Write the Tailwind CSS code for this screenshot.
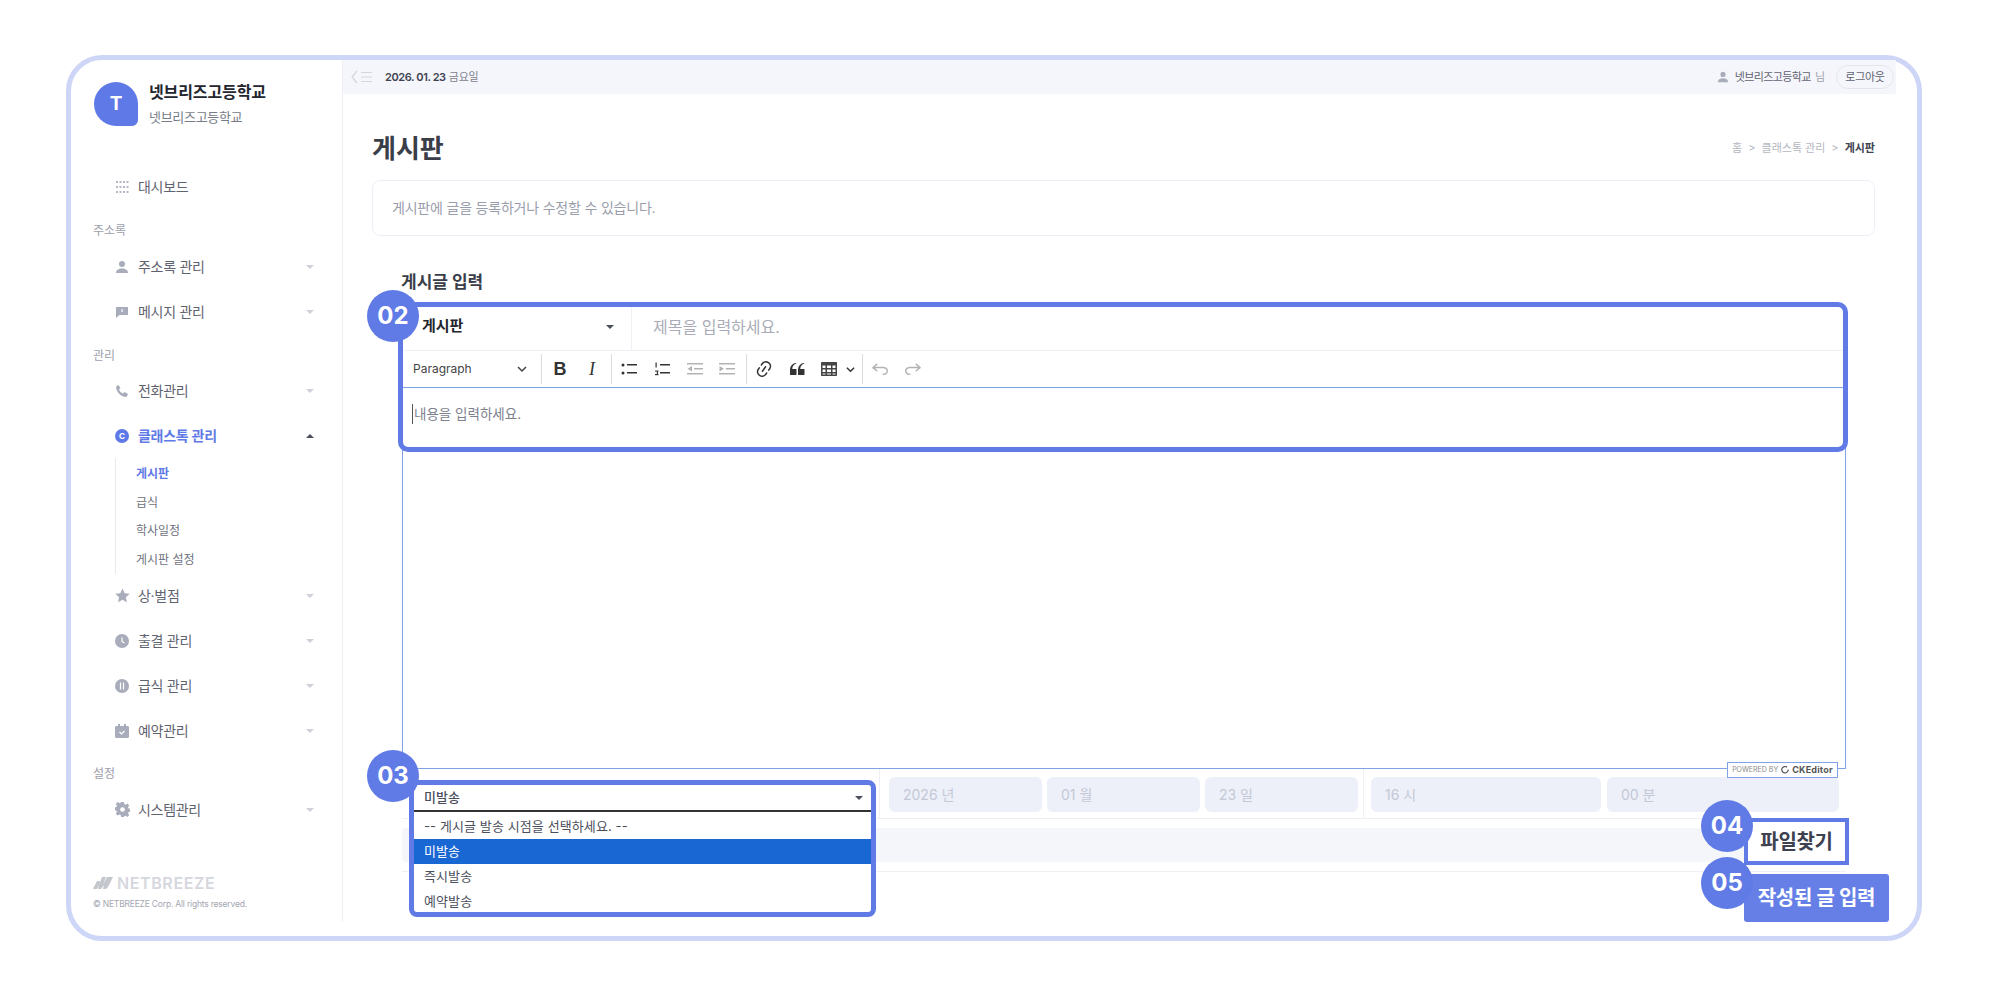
<!DOCTYPE html>
<html lang="ko">
  <head>
    <meta charset="UTF-8" />
    <meta name="viewport" content="width=device-width, initial-scale=1.0" />
    <title>게시판</title>
    <script src="https://cdn.jsdelivr.net/npm/@tailwindcss/browser@4"></script>
  </head>
  <body class="relative h-screen overflow-hidden bg-white font-['Inter','Noto_Sans_CJK_KR',sans-serif] text-[#3d4150]">
    <!-- device frame -->
    <div class="ml-[66px] mt-[55px] flex h-[886px] w-[1856px] rounded-[36px] border-[5px] border-[#cdd6f6] pb-[14px] pr-[21px]">
      <!-- sidebar -->
      <aside class="flex w-[272px] shrink-0 flex-col border-r border-[#eef0f5] pl-[22px]">
        <div class="flex items-center gap-[11px] pl-px pt-[22px]">
          <div class="flex h-[44px] w-[44px] items-center justify-center rounded-[22px] rounded-br-[6px] bg-[#5f7ae6] text-[19px] font-bold text-white">T</div>
          <div>
            <div class="text-[16px] font-bold leading-[20px] tracking-[-0.1px] text-[#23262f]">넷브리즈고등학교</div>
            <div class="mt-[6px] text-[13px] leading-[18px] tracking-[-0.3px] text-[#777b88]">넷브리즈고등학교</div>
          </div>
        </div>

        <nav class="mt-[38px] pr-[28px] text-[14px] text-[#5f6370]">
          <a class="flex h-[45px] items-center pl-[22px]">
            <svg class="mr-[9px] h-[14px] w-[14px]" viewBox="0 0 14 14" fill="#b5b8c4"><rect x="1" y="1" width="2" height="2"/><rect x="4.500" y="1" width="2" height="2"/><rect x="8" y="1" width="2" height="2"/><rect x="11.500" y="1" width="2" height="2"/><rect x="1" y="6" width="2" height="2"/><rect x="4.500" y="6" width="2" height="2"/><rect x="8" y="6" width="2" height="2"/><rect x="11.500" y="6" width="2" height="2"/><rect x="1" y="11" width="2" height="2"/><rect x="4.500" y="11" width="2" height="2"/><rect x="8" y="11" width="2" height="2"/><rect x="11.500" y="11" width="2" height="2"/></svg>
            <span class="tracking-[-0.3px]">대시보드</span>
          </a>

          <div class="flex h-[35px] items-center pt-[9px] text-[12px] text-[#9da0ac]">주소록</div>
          <a class="flex h-[45px] items-center pl-[22px]">
            <svg class="mr-[9px] h-[14px] w-[14px]" viewBox="0 0 14 14" fill="#a9adbb"><circle cx="7" cy="4" r="3"/><path d="M1 13c0-3 2.500-4.500 6-4.500s6 1.500 6 4.500z"/></svg>
            <span class="flex-1 tracking-[-0.3px]">주소록 관리</span>
            <span class="h-0 w-0 border-x-[4px] border-t-[4px] border-x-transparent border-t-[#cfd1d9]"></span>
          </a>
          <a class="flex h-[45px] items-center pl-[22px]">
            <svg class="mr-[9px] h-[14px] w-[14px]" viewBox="0 0 14 14" fill="#a9adbb"><path d="M1 2h12v8H4.500L1 13z"/><rect x="6.500" y="4" width="1.200" height="3" fill="#fff"/></svg>
            <span class="flex-1 tracking-[-0.3px]">메시지 관리</span>
            <span class="h-0 w-0 border-x-[4px] border-t-[4px] border-x-transparent border-t-[#cfd1d9]"></span>
          </a>

          <div class="flex h-[34px] items-center pt-[9px] text-[12px] text-[#9da0ac]">관리</div>
          <a class="flex h-[45px] items-center pl-[22px]">
            <svg class="mr-[9px] h-[14px] w-[14px]" viewBox="0 0 14 14" fill="#a9adbb"><path d="M1 2.500 3.500 1l2 3-1.500 1.500c.8 2 2 3.200 4 4L9.500 8l3.500 2-1.500 3C6 13 1 8 1 2.500z"/></svg>
            <span class="flex-1 tracking-[-0.3px]">전화관리</span>
            <span class="h-0 w-0 border-x-[4px] border-t-[4px] border-x-transparent border-t-[#cfd1d9]"></span>
          </a>
          <a class="flex h-[45px] items-center pl-[22px] font-semibold text-[#5f7ae6]">
            <span class="mr-[9px] flex h-[14px] w-[14px] items-center justify-center rounded-full bg-[#5f7ae6] text-[8px] font-bold text-white">C</span>
            <span class="flex-1 tracking-[-0.3px]">클래스톡 관리</span>
            <span class="h-0 w-0 border-x-[4px] border-b-[4px] border-x-transparent border-b-[#4b4f5c]"></span>
          </a>
          <div class="ml-[22px] border-l border-[#e8eaf0] pl-[20px] pt-[2px] text-[12px] text-[#6e7280]">
            <div class="flex h-[28.5px] items-center font-semibold text-[#5f7ae6]">게시판</div>
            <div class="flex h-[28.5px] items-center">급식</div>
            <div class="flex h-[28.5px] items-center">학사일정</div>
            <div class="-mb-px flex h-[28.5px] items-center">게시판 설정</div>
          </div>
          <a class="flex h-[45px] items-center pl-[22px]">
            <svg class="mr-[8px] h-[15px] w-[15px]" viewBox="0 0 14 14" fill="#a9adbb"><path d="m7 .5 2 4.300 4.700.6-3.500 3.200.9 4.700L7 11l-4.100 2.300.9-4.700L.3 5.400 5 4.800z"/></svg>
            <span class="flex-1 tracking-[-0.3px]">상·벌점</span>
            <span class="h-0 w-0 border-x-[4px] border-t-[4px] border-x-transparent border-t-[#cfd1d9]"></span>
          </a>
          <a class="flex h-[45px] items-center pl-[22px]">
            <svg class="mr-[9px] h-[14px] w-[14px]" viewBox="0 0 14 14"><circle cx="7" cy="7" r="7" fill="#a9adbb"/><path d="M7 3.500V7.500l2.500 1.500" fill="none" stroke="#fff" stroke-width="1.200"/></svg>
            <span class="flex-1 tracking-[-0.3px]">출결 관리</span>
            <span class="h-0 w-0 border-x-[4px] border-t-[4px] border-x-transparent border-t-[#cfd1d9]"></span>
          </a>
          <a class="flex h-[45px] items-center pl-[22px]">
            <svg class="mr-[9px] h-[14px] w-[14px]" viewBox="0 0 14 14"><circle cx="7" cy="7" r="7" fill="#a9adbb"/><path d="M5.500 3.500v7M8.500 3.500v7" fill="none" stroke="#fff" stroke-width="1.200"/></svg>
            <span class="flex-1 tracking-[-0.3px]">급식 관리</span>
            <span class="h-0 w-0 border-x-[4px] border-t-[4px] border-x-transparent border-t-[#cfd1d9]"></span>
          </a>
          <a class="flex h-[45px] items-center pl-[22px]">
            <svg class="mr-[9px] h-[14px] w-[14px]" viewBox="0 0 14 14"><path d="M3 0h2v2h4V0h2v2h1.500c.8 0 1.500.7 1.500 1.500V12.500c0 .8-.7 1.500-1.500 1.500h-11C.7 14 0 13.300 0 12.500V3.500C0 2.700.7 2 1.500 2H3z" fill="#a9adbb"/><path d="m4.500 8 2 2 3-3" fill="none" stroke="#fff" stroke-width="1.200"/></svg>
            <span class="flex-1 tracking-[-0.3px]">예약관리</span>
            <span class="h-0 w-0 border-x-[4px] border-t-[4px] border-x-transparent border-t-[#cfd1d9]"></span>
          </a>

          <div class="flex h-[34px] items-center pt-[8px] text-[12px] text-[#9da0ac]">설정</div>
          <a class="flex h-[45px] items-center pl-[22px]">
            <svg class="mr-[8px] h-[15px] w-[15px]" viewBox="0 0 16 16"><path d="M6.500 0h3l.4 2.200 1.300.6 1.900-1.300 2.100 2.100-1.300 1.900.6 1.300 2.200.4v3l-2.200.4-.6 1.300 1.300 1.900-2.100 2.100-1.900-1.300-1.300.6L9.500 16h-3l-.4-2.200-1.300-.6-1.900 1.300L.8 12.400l1.300-1.900-.6-1.300-2.200-.4v-3l2.200-.4.6-1.300L.8 2.200 2.900.1l1.900 1.300 1.300-.6z" fill="#a9adbb"/><circle cx="8" cy="8" r="2.500" fill="#fff"/></svg>
            <span class="flex-1 tracking-[-0.3px]">시스템관리</span>
            <span class="h-0 w-0 border-x-[4px] border-t-[4px] border-x-transparent border-t-[#cfd1d9]"></span>
          </a>
        </nav>

        <div class="mt-auto pb-[11px]">
          <div class="flex items-center gap-[4px]">
            <svg class="h-[12px] w-[20px]" viewBox="0 0 20 12" fill="#c4c6ce"><path d="M0 12 4 4h3l-1 4 3-8h4l-3 8 4-8h6l-4 8c-1 2-2 4-4 4h-2l1-4-3 4H5l1-4-2 4z"/></svg>
            <span class="text-[16px] font-semibold leading-[18px] tracking-[0.6px] text-[#d5d7de]">NETBREEZE</span>
          </div>
          <div class="mt-[5px] text-[8.5px] leading-[14px] tracking-[-0.2px] text-[#a3a6b1]">© NETBREEZE Corp. All rights reserved.</div>
        </div>
      </aside>

      <!-- main -->
      <main class="flex min-w-0 flex-1 flex-col">
        <div class="flex h-[34px] items-center bg-[#f5f6fb] pl-[8px] pr-[2px]">
          <svg class="h-[14px] w-[22px]" viewBox="0 0 22 14" fill="none" stroke="#d3d6df" stroke-width="1.200"><path d="M6 1 1 7l5 6M10 2.500h11M10 7h11M10 11.500h11"/></svg>
          <span class="ml-[12px] text-[11px] font-semibold tracking-[-0.4px] text-[#3d4150]">2026. 01. 23</span>
          <span class="ml-[3px] text-[11px] tracking-[-0.2px] text-[#7d808d]">금요일</span>
          <svg class="ml-auto h-[12px] w-[12px]" viewBox="0 0 14 14" fill="#a9adbb"><circle cx="7" cy="4" r="3"/><path d="M1 13c0-3 2.500-4.500 6-4.500s6 1.500 6 4.500z"/></svg>
          <span class="ml-[6px] text-[11px] tracking-[-0.6px] text-[#5f6370]">넷브리즈고등학교</span>
          <span class="ml-[4px] text-[11px] text-[#9da0ac]">님</span>
          <button class="ml-[11px] h-[24px] w-[58px] rounded-full border border-[#e4e6ed] text-[11px] tracking-[-0.3px] text-[#5f6370]">로그아웃</button>
        </div>

        <div class="pl-[29px] pr-[21px]">
          <div class="mt-[34px] flex h-[40px] items-center justify-between">
            <h1 class="text-[26px] font-bold text-[#3a3e49]">게시판</h1>
            <div class="flex items-center gap-[6px] text-[11px] text-[#b3b6c0]">
              <span>홈</span><span>&gt;</span><span>클래스톡 관리</span><span>&gt;</span><span class="font-bold text-[#3d4150]">게시판</span>
            </div>
          </div>
          <div class="mt-[12px] flex h-[56px] items-center rounded-lg border border-[#eceef6] pb-[2px] pl-[19px] text-[14px] tracking-[-0.2px] text-[#9a9dab]">게시판에 글을 등록하거나 수정할 수 있습니다.</div>
          <h2 class="mt-[34px] pl-[29px] text-[17px] font-bold leading-[24px] text-[#3a3e49]">게시글 입력</h2>

          <form class="ml-[30px] mr-[29px] mt-[12px]">
            <div class="flex h-[45px] items-center border-b border-[#f0f1f5]">
              <div class="flex h-full w-[230px] items-center justify-between border-r border-[#eef0f5] pb-[3px] pl-[20px] pr-[17px]">
                <span class="text-[15px] font-bold text-[#23262f]">게시판</span>
                <span class="h-0 w-0 border-x-[4px] border-t-[4px] border-x-transparent border-t-[#4b4f5c]"></span>
              </div>
              <span class="pb-[2px] pl-[21px] text-[16px] text-[#a9acb7]">제목을 입력하세요.</span>
            </div>

            <!-- editor toolbar -->
            <div class="flex h-[37px] items-center border-b border-[#7fa3e6] pl-[11px] text-[#333]">
              <span class="w-[104px] text-[12px] text-[#444]">Paragraph</span>
              <svg class="h-[10px] w-[10px]" viewBox="0 0 10 10" fill="none" stroke="#444" stroke-width="1.500"><path d="m1 3 4 4 4-4"/></svg>
              <span class="ml-[14px] h-[30px] w-px bg-[#dcdcdc]"></span>
              <span class="ml-[8px] w-[20px] text-center font-['Liberation_Sans',sans-serif] text-[18px] font-bold leading-[20px]">B</span>
              <span class="ml-[12px] w-[20px] text-center font-['Liberation_Serif',serif] text-[18px] italic leading-[20px]">I</span>
              <span class="ml-[9px] h-[30px] w-px bg-[#dcdcdc]"></span>
              <svg class="ml-[7px] h-[20px] w-[20px]" viewBox="0 0 20 20" fill="#333"><circle cx="4" cy="6" r="1.500"/><circle cx="4" cy="14" r="1.500"/><rect x="8" y="5" width="10" height="1.500"/><rect x="8" y="13" width="10" height="1.500"/></svg>
              <svg class="ml-[13px] h-[20px] w-[20px]" viewBox="0 0 20 20" fill="#333"><rect x="3.500" y="3.500" width="1.200" height="5"/><rect x="3" y="11.500" width="3.500" height="1"/><rect x="3" y="15" width="3.500" height="1.200"/><rect x="4.800" y="12" width="1.200" height="3"/><rect x="8" y="5" width="10" height="1.500"/><rect x="8" y="13" width="10" height="1.500"/></svg>
              <svg class="ml-[13px] h-[20px] w-[20px]" viewBox="0 0 20 20" fill="#b3b3b3"><rect x="2" y="4" width="16" height="1.500"/><rect x="9" y="9" width="9" height="1.500"/><rect x="2" y="14" width="16" height="1.500"/><path d="M7 7v5.500L2.500 9.800z"/></svg>
              <svg class="ml-[12px] h-[20px] w-[20px]" viewBox="0 0 20 20" fill="#b3b3b3"><rect x="2" y="4" width="16" height="1.500"/><rect x="9" y="9" width="9" height="1.500"/><rect x="2" y="14" width="16" height="1.500"/><path d="M2.500 7v5.500L7 9.800z"/></svg>
              <span class="ml-[9px] h-[30px] w-px bg-[#dcdcdc]"></span>
              <svg class="ml-[7px] h-[20px] w-[20px]" viewBox="0 0 20 20" fill="#333"><path d="m11.077 15 .991-1.416a.75.75 0 1 1 1.229.86l-1.148 1.64a.748.748 0 0 1-.217.206 5.251 5.251 0 0 1-8.503-5.955.741.741 0 0 1 .12-.274l1.147-1.639a.75.75 0 1 1 1.228.86L4.933 10.700l.006.003a3.750 3.750 0 0 0 6.132 4.294l.006.004zm5.494-5.335a.748.748 0 0 1-.12.274l-1.147 1.639a.75.75 0 1 1-1.228-.86l.86-1.230a3.750 3.750 0 0 0-6.144-4.301l-.86 1.229a.75.75 0 0 1-1.229-.86l1.148-1.640a.748.748 0 0 1 .217-.206 5.251 5.251 0 0 1 8.503 5.955zm-4.563-2.532a.75.75 0 0 1 .184 1.045l-3.155 4.505a.75.75 0 1 1-1.229-.86l3.155-4.506a.75.75 0 0 1 1.045-.184z"/></svg>
              <svg class="ml-[13px] h-[20px] w-[20px]" viewBox="0 0 20 20" fill="#333"><path d="M3 10.423a6.500 6.500 0 0 1 6.056-6.408l.038.67C6.448 5.423 5.354 7.663 5.220 10H9c.552 0 .5.432.5.986v4.511c0 .554-.448.503-1 .503h-5c-.552 0-.5-.449-.5-1.003v-4.574zm8 0a6.500 6.500 0 0 1 6.056-6.408l.038.67c-2.646.739-3.740 2.979-3.873 5.315H17c.552 0 .5.432.5.986v4.511c0 .554-.448.503-1 .503h-5c-.552 0-.5-.449-.5-1.003v-4.574z"/></svg>
              <svg class="ml-[12px] h-[20px] w-[20px]" viewBox="0 0 20 20" fill="#444"><path d="M3 3h14c.6 0 1 .4 1 1v12c0 .6-.4 1-1 1H3c-.6 0-1-.4-1-1V4c0-.6.4-1 1-1zm.5 3.500V9h3V6.500zm4.500 0V9h4V6.500zm5.500 0V9h3V6.500zM3.500 10.500V13h3v-2.500zm4.500 0V13h4v-2.500zm5.500 0V13h3v-2.500zM3.500 14.500v1h3v-1zm4.500 0v1h4v-1zm5.500 0v1h3v-1z"/></svg>
              <svg class="ml-[7px] h-[9px] w-[9px]" viewBox="0 0 10 10" fill="none" stroke="#333" stroke-width="1.600"><path d="m1 3 4 4 4-4"/></svg>
              <span class="ml-[7px] h-[30px] w-px bg-[#dcdcdc]"></span>
              <svg class="ml-[7px] h-[20px] w-[20px]" viewBox="0 0 20 20" fill="#b3b3b3"><path d="m5.042 9.367 2.189 1.837a.75.75 0 0 1-.965 1.149l-3.788-3.180a.747.747 0 0 1-.21-.284.75.75 0 0 1 .17-.945L6.230 4.762a.75.75 0 1 1 .964 1.150L4.863 7.866h8.917A.75.75 0 0 1 14 7.900a4 4 0 1 1-1.477 7.718l.344-1.489a2.500 2.500 0 1 0 1.094-4.730l.008-.032H5.042z"/></svg>
              <svg class="ml-[13px] h-[20px] w-[20px] -scale-x-100" viewBox="0 0 20 20" fill="#b3b3b3"><path d="m5.042 9.367 2.189 1.837a.75.75 0 0 1-.965 1.149l-3.788-3.180a.747.747 0 0 1-.21-.284.75.75 0 0 1 .17-.945L6.230 4.762a.75.75 0 1 1 .964 1.150L4.863 7.866h8.917A.75.75 0 0 1 14 7.900a4 4 0 1 1-1.477 7.718l.344-1.489a2.500 2.500 0 1 0 1.094-4.730l.008-.032H5.042z"/></svg>
            </div>
            <div class="flex h-[381px] items-start border-x border-b border-[#7fa3e6] pl-[9px] pt-[16px] text-[13.5px] leading-[20px] text-[#7d808d]">
              <span class="mr-[1px] h-[20px] w-px bg-[#555]"></span>
              <span>내용을 입력하세요.</span>
            </div>

            <!-- send time row -->
            <div class="flex h-[50px] border-b border-[#eef0f5] text-[14px] text-[#c3c8d6]">
              <div class="w-[478px] border-r border-[#eef0f5]"></div>
              <div class="flex w-[484px] items-start gap-[5px] border-r border-[#eef0f5] pl-[9px] pt-[8px]">
                <div class="flex h-[35px] w-[153px] items-center rounded-md bg-[#edf0f9] pl-[14px]">2026 년</div>
                <div class="flex h-[35px] w-[153px] items-center rounded-md bg-[#edf0f9] pl-[14px]">01 월</div>
                <div class="flex h-[35px] w-[153px] items-center rounded-md bg-[#edf0f9] pl-[14px]">23 일</div>
              </div>
              <div class="flex flex-1 items-start gap-[6px] pl-[7px] pt-[8px]">
                <div class="flex h-[35px] w-[230px] items-center rounded-md bg-[#edf0f9] pl-[14px]">16 시</div>
                <div class="flex h-[35px] w-[232px] items-center rounded-md bg-[#edf0f9] pl-[14px]">00 분</div>
              </div>
            </div>
            <div class="border-b border-[#eef0f5] pb-[9px] pr-[4px] pt-[9px]">
              <div class="h-[34px] rounded-sm bg-[#f5f6f9]"></div>
            </div>
          </form>
        </div>
      </main>
    </div>

    <!-- annotation overlays -->
    <div class="absolute left-[398px] top-[302px] h-[150px] w-[1450px] rounded-[10px] border-[5px] border-[#617be6]"></div>
    <div class="absolute left-[367px] top-[290px] flex h-[52px] w-[52px] items-center justify-center rounded-full bg-[#617be6] text-[24px] font-bold text-white">02</div>

    <div class="absolute left-[1727px] top-[762px] flex h-[16px] w-[111px] items-center justify-center gap-[3px] border border-[#7fa3e6] bg-white text-[7px] text-[#8a8a8a]">
      POWERED BY
      <svg class="h-[8px] w-[8px]" viewBox="0 0 10 10" fill="none" stroke="#555" stroke-width="1.500"><path d="M7.500 1.500a4 4 0 1 0 1.500 3"/></svg>
      <span class="text-[9px] font-bold tracking-[0.2px] text-[#555]">CKEditor</span>
    </div>

    <!-- open send time select -->
    <div class="absolute left-[409px] top-[780px] h-[137px] w-[467px] overflow-hidden rounded-[8px] border-[5px] border-[#617be6] bg-white text-[13px] tracking-[0.1px] text-[#4b4f5c]">
      <div class="flex h-[27px] items-center justify-between border-b-2 border-[#333] pl-[10px] pr-[8px] font-medium">
        <span>미발송</span>
        <span class="h-0 w-0 border-x-[4px] border-t-[4px] border-x-transparent border-t-[#4b4f5c]"></span>
      </div>
      <div class="flex h-[27px] items-center pl-[10px] pt-[2px]">-- 게시글 발송 시점을 선택하세요. --</div>
      <div class="flex h-[25px] items-center bg-[#1967d2] pl-[10px] text-white">미발송</div>
      <div class="flex h-[25px] items-center pl-[10px]">즉시발송</div>
      <div class="flex h-[25px] items-center pl-[10px]">예약발송</div>
    </div>
    <div class="absolute left-[367px] top-[750px] flex h-[52px] w-[52px] items-center justify-center rounded-full bg-[#617be6] text-[24px] font-bold text-white">03</div>

    <button class="absolute left-[1744px] top-[818px] h-[47px] w-[105px] border-[4px] border-[#617be6] bg-white text-[20px] font-bold tracking-[-0.3px] text-[#3d4150]">파일찾기</button>
    <button class="absolute left-[1744px] top-[874px] h-[48px] w-[145px] rounded-[3px] bg-[#667fe6] text-[20px] font-bold tracking-[-0.3px] text-white">작성된 글 입력</button>
    <div class="absolute left-[1701px] top-[800px] flex h-[52px] w-[52px] items-center justify-center rounded-full bg-[#617be6] text-[24px] font-bold text-white">04</div>
    <div class="absolute left-[1701px] top-[857px] flex h-[52px] w-[52px] items-center justify-center rounded-full bg-[#617be6] text-[24px] font-bold text-white">05</div>
  </body>
</html>
